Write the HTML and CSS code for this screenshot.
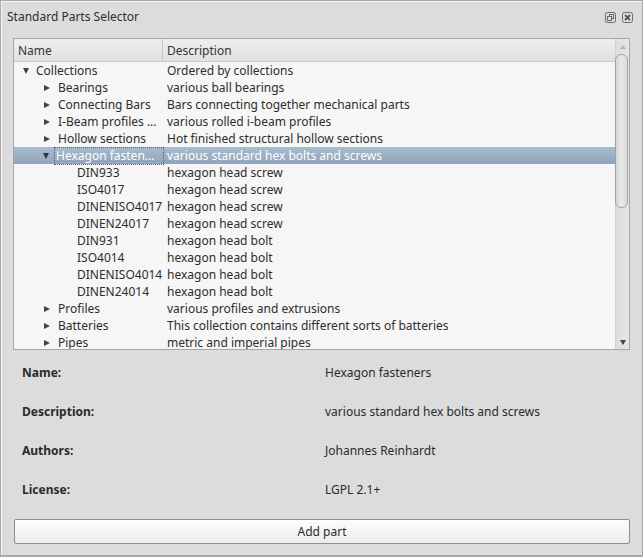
FILE: index.html
```html
<!DOCTYPE html>
<html>
<head>
<meta charset="utf-8">
<link rel="stylesheet" href="styles.css">
</head>
<body>
<div class="window">
  <div class="titlebar">
    <span class="title">Standard Parts Selector</span>
    <div class="title-btns">
      <svg class="tbtn" width="11" height="11" viewBox="0 0 11 11">
        <rect x="0.5" y="0.5" width="10" height="10" rx="2" fill="none" stroke="#6a6a6a"/>
        <rect x="4.5" y="2.5" width="4" height="4" fill="none" stroke="#6a6a6a"/>
        <rect x="2.5" y="4.5" width="4" height="4" fill="#dcdcdc" stroke="#6a6a6a"/>
      </svg>
      <svg class="tbtn" width="11" height="11" viewBox="0 0 11 11">
        <rect x="0.5" y="0.5" width="10" height="10" rx="2" fill="none" stroke="#6a6a6a"/>
        <path d="M3 3 L8 8 M8 3 L3 8" stroke="#555" stroke-width="1.8"/>
      </svg>
    </div>
  </div>

  <div class="tree">
    <div class="tree-main">
      <div class="header">
        <div class="hcell hname">Name</div>
        <div class="hcell hdesc">Description</div>
      </div>
      <div class="rows">
        <div class="row"><div class="name l1"><span class="arrow down"></span>Collections</div><div class="desc">Ordered by collections</div></div>
        <div class="row"><div class="name l2"><span class="arrow right"></span>Bearings</div><div class="desc">various ball bearings</div></div>
        <div class="row"><div class="name l2"><span class="arrow right"></span>Connecting Bars</div><div class="desc">Bars connecting together mechanical parts</div></div>
        <div class="row"><div class="name l2"><span class="arrow right"></span>I-Beam profiles ...</div><div class="desc">various rolled i-beam profiles</div></div>
        <div class="row"><div class="name l2"><span class="arrow right"></span>Hollow sections</div><div class="desc">Hot finished structural hollow sections</div></div>
        <div class="row sel"><div class="name l2"><span class="arrow down"></span><span class="focus">Hexagon fasten...</span></div><div class="desc">various standard hex bolts and screws</div></div>
        <div class="row"><div class="name l3">DIN933</div><div class="desc">hexagon head screw</div></div>
        <div class="row"><div class="name l3">ISO4017</div><div class="desc">hexagon head screw</div></div>
        <div class="row"><div class="name l3">DINENISO4017</div><div class="desc">hexagon head screw</div></div>
        <div class="row"><div class="name l3">DINEN24017</div><div class="desc">hexagon head screw</div></div>
        <div class="row"><div class="name l3">DIN931</div><div class="desc">hexagon head bolt</div></div>
        <div class="row"><div class="name l3">ISO4014</div><div class="desc">hexagon head bolt</div></div>
        <div class="row"><div class="name l3">DINENISO4014</div><div class="desc">hexagon head bolt</div></div>
        <div class="row"><div class="name l3">DINEN24014</div><div class="desc">hexagon head bolt</div></div>
        <div class="row"><div class="name l2"><span class="arrow right"></span>Profiles</div><div class="desc">various profiles and extrusions</div></div>
        <div class="row"><div class="name l2"><span class="arrow right"></span>Batteries</div><div class="desc">This collection contains different sorts of batteries</div></div>
        <div class="row"><div class="name l2"><span class="arrow right"></span>Pipes</div><div class="desc">metric and imperial pipes</div></div>
      </div>
    </div>
    <div class="scrollbar">
      <span class="sarrow up"></span>
      <div class="track"><div class="handle"></div></div>
      <span class="sarrow dn"></span>
    </div>
  </div>

  <div class="form">
    <div class="frow"><div class="flabel">Name:</div><div class="fval">Hexagon fasteners</div></div>
    <div class="frow"><div class="flabel">Description:</div><div class="fval">various standard hex bolts and screws</div></div>
    <div class="frow"><div class="flabel">Authors:</div><div class="fval">Johannes Reinhardt</div></div>
    <div class="frow"><div class="flabel">License:</div><div class="fval">LGPL 2.1+</div></div>
  </div>

  <div class="btnrow"><button class="addbtn">Add part</button></div>
</div>
</body>
</html>
```

FILE: styles.css
```css
html, body {
  margin: 0;
  padding: 0;
  background: #dcdcdc;
}
body {
  font-family: "Noto Sans", "DejaVu Sans", sans-serif;
  font-size: 12px;
  color: #2b2b2b;
}
.window {
  box-sizing: border-box;
  width: 643px;
  height: 557px;
  border: 1px solid #a9a9a9;
  border-bottom: 2px solid #a9a9a9;
  box-shadow: inset 1px 1px 0 #f4f4f4;
  background: #dcdcdc;
  display: flex;
  flex-direction: column;
  padding: 0 12px 0 12px;
}
.titlebar {
  height: 32px;
  display: flex;
  align-items: center;
  justify-content: space-between;
  margin-left: -6px;
  margin-right: -3px;
}
.title {
  font-size: 12px;
  color: #2e2e2e;
  padding-bottom: 1px;
}
.title-btns {
  display: flex;
  gap: 6px;
}
.tbtn { display: block; }

.tree {
  height: 312px;
  box-sizing: border-box;
  margin-top: 5px;
  border: 1px solid #a7a7a7;
  background: #f6f6f6;
  display: flex;
  overflow: hidden;
}
.tree-main {
  flex: 1;
  min-width: 0;
  display: flex;
  flex-direction: column;
}
.header {
  height: 22px;
  flex: none;
  display: flex;
  background: linear-gradient(#efefef, #e1e1e1);
  border-bottom: 1px solid #c9c9c9;
}
.hcell {
  display: flex;
  align-items: center;
  color: #333;
}
.hname {
  width: 149px;
  padding-left: 4px;
  box-sizing: border-box;
  border-right: 1px solid #c9c9c9;
}
.hdesc {
  padding-left: 4px;
}
.rows {
  display: flex;
  flex-direction: column;
}
.row {
  height: 17px;
  flex: none;
  display: flex;
  align-items: center;
  color: #2d2d2d;
  white-space: nowrap;
}
.name {
  width: 149px;
  flex: none;
  box-sizing: border-box;
  display: flex;
  align-items: center;
  height: 17px;
}
.desc {
  padding-left: 4px;
}
.l1 { padding-left: 9px; }
.l2 { padding-left: 29px; }
.l3 { padding-left: 63px; }
.arrow {
  width: 0;
  height: 0;
  margin-right: 6px;
  flex: none;
}
.arrow.right {
  border-top: 3.5px solid transparent;
  border-bottom: 3.5px solid transparent;
  border-left: 6px solid #444;
  margin-left: 1px;
  margin-right: 8px;
}
.arrow.down {
  border-left: 3.5px solid transparent;
  border-right: 3.5px solid transparent;
  border-top: 6px solid #444;
  margin-right: 7px;
}
.row.sel {
  background: linear-gradient(#a9bccf, #8fa4bb);
  color: #ffffff;
}
.row.sel .arrow.down { border-top-color: #333; }
.focus {
  outline: 1px dotted #5a6470;
  outline-offset: 0;
  padding: 0 1px;
  margin-left: -1px;
  height: 16px;
  line-height: 16px;
  width: 127px;
  box-sizing: border-box;
}

.scrollbar {
  width: 13px;
  flex: none;
  background: linear-gradient(90deg, #dddddd, #e6e6e6);
  border-left: 1px solid #d0d0d0;
  display: flex;
  flex-direction: column;
  align-items: center;
}
.sarrow {
  width: 0;
  height: 0;
  flex: none;
}
.sarrow.up {
  margin-top: 6px;
  border-left: 3px solid transparent;
  border-right: 3px solid transparent;
  border-bottom: 4px solid #b5b5b5;
}
.sarrow.dn {
  margin-bottom: 4px;
  border-left: 3.5px solid transparent;
  border-right: 3.5px solid transparent;
  border-top: 5px solid #444;
}
.track {
  flex: 1;
  width: 100%;
  padding-top: 5px;
  box-sizing: border-box;
}
.handle {
  width: 13px;
  height: 154px;
  box-sizing: border-box;
  border: 1px solid #a2a2a2;
  border-radius: 6px;
  background: linear-gradient(90deg, #d6d6d6, #e9e9e9 50%, #d9d9d9);
  margin-left: -1px;
}

.form {
  display: flex;
  flex-direction: column;
  padding-top: 3px;
}
.frow {
  height: 39px;
  display: flex;
  align-items: center;
}
.flabel {
  width: 312px;
  padding-left: 9px;
  box-sizing: border-box;
  font-weight: bold;
  color: #2b2b2b;
}
.fval {
  color: #2b2b2b;
}
.btnrow {
  padding-top: 10px;
  display: flex;
}
.addbtn {
  flex: 1;
  margin-left: 1px;
  height: 25px;
  border: 1px solid #8e8e8e;
  border-radius: 2px;
  background: linear-gradient(#fdfdfd, #ececec);
  font-family: "Noto Sans", "DejaVu Sans", sans-serif;
  font-size: 12px;
  color: #2b2b2b;
  padding: 0;
}
```
